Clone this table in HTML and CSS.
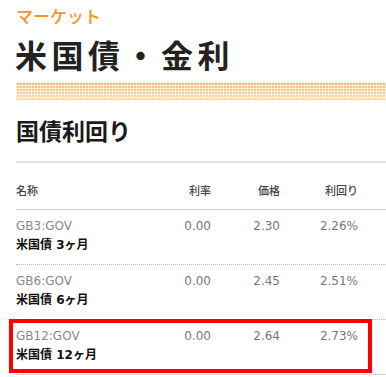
FILE: index.html
```html
<!DOCTYPE html>
<html lang="ja">
<head>
<meta charset="utf-8">
<link rel="stylesheet" href="styles.css">
</head>
<body>
<div class="page">
  <div class="kicker">マーケット</div>
  <h1 class="title">米国債・金利</h1>
  <div class="band"></div>
  <h2 class="section">国債利回り</h2>
  <div class="table">
    <div class="head">
      <div class="c name">名称</div>
      <div class="c num">利率</div>
      <div class="c num">価格</div>
      <div class="c num">利回り</div>
    </div>
    <div class="row">
      <div class="c name"><div class="code">GB3:GOV</div><div class="label">米国債 3ヶ月</div></div>
      <div class="c num">0.00</div>
      <div class="c num">2.30</div>
      <div class="c num">2.26%</div>
    </div>
    <div class="row">
      <div class="c name"><div class="code">GB6:GOV</div><div class="label">米国債 6ヶ月</div></div>
      <div class="c num">0.00</div>
      <div class="c num">2.45</div>
      <div class="c num">2.51%</div>
    </div>
    <div class="row highlighted">
      <div class="c name"><div class="code">GB12:GOV</div><div class="label">米国債 12ヶ月</div></div>
      <div class="c num">0.00</div>
      <div class="c num">2.64</div>
      <div class="c num">2.73%</div>
      <div class="mark"></div>
    </div>
  </div>
</div>
</body>
</html>
```

FILE: styles.css
```css
html, body {
  margin: 0;
  padding: 0;
  background: #fff;
  overflow: hidden;
}
body {
  font-family: "DejaVu Sans", "Noto Sans CJK JP", sans-serif;
  color: #222;
}
.page {
  padding-left: 16px;
  width: 370px;
}
.kicker {
  font-family: "Noto Sans CJK JP", sans-serif;
  color: #f7931e;
  font-size: 17px;
  font-weight: 500;
  line-height: 20px;
  padding-top: 6px;
}
.title {
  font-family: "Noto Sans CJK JP", sans-serif;
  font-size: 32px;
  font-weight: 700;
  letter-spacing: 4.5px;
  line-height: 40px;
  margin: 8px 0 0 -1px;
  color: #222;
}
.band {
  margin-top: 8px;
  height: 19px;
  background-color: #fde6c8;
  background-image:
    linear-gradient(90deg, rgba(255,255,255,0.7) 1px, transparent 1px),
    linear-gradient(rgba(255,255,255,0.7) 1px, transparent 1px),
    linear-gradient(#f9b866, #fcd9ab);
  background-size: 3px 3px, 3px 3px, 100% 100%;
}
.section {
  font-family: "Noto Sans CJK JP", sans-serif;
  font-size: 23px;
  font-weight: 700;
  line-height: 30px;
  margin: 14px 0 0 0;
  color: #1a1a1a;
}
.table {
  margin-top: 16px;
  border-top: 2px solid #e2e2e2;
}
.head, .row {
  display: grid;
  grid-template-columns: 125px 70px 69px 78px 28px;
  align-items: start;
}
.head {
  height: 46px;
  border-bottom: 1px solid #cfcfcf;
  align-items: center;
}
.head .c {
  font-size: 11px;
  font-weight: 500;
  color: #444;
  padding-top: 8px;
}
.num {
  text-align: right;
}
.row {
  height: 54px;
  border-bottom: 1px dotted #b8b8b8;
  position: relative;
}
.row .c {
  padding-top: 8px;
  font-size: 12px;
  line-height: 17px;
}
.row .num {
  color: #777;
}
.code {
  color: #888;
  font-size: 12px;
  line-height: 17px;
}
.label {
  margin-top: 2px;
  font-size: 12px;
  font-weight: 700;
  color: #111;
  line-height: 17px;
  white-space: nowrap;
}
.mark {
  position: absolute;
  left: -7px;
  top: -1px;
  width: 363px;
  height: 54px;
  border: 4px solid #ff0000;
  box-sizing: border-box;
}
```
